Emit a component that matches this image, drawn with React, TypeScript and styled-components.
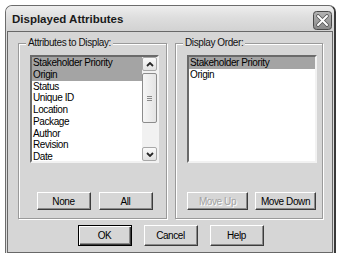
import React from 'react';
import styled, { createGlobalStyle } from 'styled-components';

const Global = createGlobalStyle`
  html, body { margin: 0; padding: 0; background: #ffffff; }
  body { font-family: "Liberation Sans", Arial, sans-serif; color: #000; }
`;

const Page = styled.div`
  width: 350px;
  height: 256px;
  box-sizing: border-box;
  padding: 5px 0 0 5px;
  overflow: hidden;
`;

const Window = styled.div`
  width: 331px;
  box-sizing: border-box;
  border: 1px solid #6c6c6c;
  border-right: 2px solid #3a3a3a;
  border-bottom: none;
  border-radius: 7px 7px 0 0;
  background: #dcdcdc;
  display: flex;
  flex-direction: column;
`;

const TitleBar = styled.div`
  height: 25px;
  display: flex;
  align-items: center;
  justify-content: space-between;
  padding: 0 2px 0 6px;
  border-radius: 6px 6px 0 0;
  background: linear-gradient(#eeeeee, #dedede 45%, #d2d2d2);
`;

const Title = styled.span`
  font-family: "Liberation Sans", Arial, sans-serif;
  font-weight: bold;
  font-size: 11.5px;
  color: #1a1a1a;
  padding-top: 1px;
`;

const CloseBtn = styled.div`
  width: 19px;
  height: 19px;
  display: flex;
  margin-top: 3px;
`;

const Client = styled.div`
  margin: 0 1px;
  border: 1px solid #686868;
  background: #d6d6d6;
  padding: 0 9px 6px 10px;
  display: flex;
  flex-direction: column;
`;

const GroupsRow = styled.div`
  display: flex;
  gap: 8px;
  margin-top: 11px;
`;

const GroupBox = styled.div<{ $w: number; $pr: number }>`
  width: ${(p) => p.$w}px;
  box-sizing: border-box;
  border: 1px solid #9a9a9a;
  box-shadow: inset 1px 1px 0 #ffffff, 1px 1px 0 #ffffff;
  padding: 0 ${(p) => p.$pr}px 8px 11px;
  display: flex;
  flex-direction: column;
`;

const Legend = styled.div`
  width: fit-content;
  margin: -7px 0 0 -4px;
  padding: 0 2px;
  background: #d6d6d6;
  font-size: 10px;
  letter-spacing: -0.4px;
  line-height: 12px;
  color: #111;
`;

const ListBox = styled.div<{ $w: number }>`
  width: ${(p) => p.$w}px;
  height: 108px;
  box-sizing: border-box;
  margin-top: 6px;
  border: 2px solid;
  border-color: #6a6a6a #f2f2f2 #f2f2f2 #6a6a6a;
  background: #ffffff;
  display: flex;
  overflow: hidden;
`;

const Items = styled.div`
  flex: 1;
  min-width: 0;
  display: flex;
  flex-direction: column;
`;

const Item = styled.div<{ $sel?: boolean }>`
  flex: none;
  height: 11.75px;
  line-height: 11.75px;
  padding-left: 1px;
  font-size: 10px;
  letter-spacing: -0.4px;
  white-space: nowrap;
  background: ${(p) => (p.$sel ? '#a4a4a4' : 'transparent')};
  color: #000;
`;

const ScrollBar = styled.div`
  width: 15px;
  flex: none;
  display: flex;
  flex-direction: column;
  background: #f1f1f1;
`;

const ScrollBtn = styled.div`
  height: 14px;
  box-sizing: border-box;
  border: 1px solid #a8a8a8;
  border-radius: 2px;
  background: linear-gradient(#fafafa, #e2e2e2);
  display: flex;
  align-items: center;
  justify-content: center;
`;

const Track = styled.div`
  flex: 1;
  display: flex;
  flex-direction: column;
  padding-top: 2px;
`;

const Thumb = styled.div`
  height: 50px;
  box-sizing: border-box;
  border: 1px solid #8c8c8c;
  border-radius: 2px;
  background: linear-gradient(90deg, #f6f6f6, #e4e4e4);
  display: flex;
  flex-direction: column;
  align-items: center;
  justify-content: center;
  gap: 1px;
`;

const Grip = styled.div`
  width: 5px;
  height: 1px;
  background: #8a8a8a;
`;

const ButtonRow = styled.div<{ $gap: number; $mt: number }>`
  display: flex;
  justify-content: center;
  gap: ${(p) => p.$gap}px;
  margin-top: ${(p) => p.$mt}px;
`;

const Button = styled.button<{ $w: number; $h: number; $default?: boolean }>`
  width: ${(p) => p.$w}px;
  height: ${(p) => p.$h}px;
  box-sizing: border-box;
  padding: 0;
  margin: 0;
  background: #d6d6d6;
  border: 1px solid;
  border-color: ${(p) => (p.$default ? '#000' : '#ffffff #3c3c3c #3c3c3c #ffffff')};
  box-shadow: ${(p) =>
    p.$default
      ? 'inset 1px 1px 0 #ffffff, inset -1px -1px 0 #3c3c3c, inset -2px -2px 0 #8a8a8a'
      : 'inset -1px -1px 0 #8a8a8a'};
  font-family: "Liberation Sans", Arial, sans-serif;
  font-size: 10px;
  letter-spacing: -0.4px;
  color: #000;
  &:disabled {
    color: #a2a2a2;
    text-shadow: 1px 1px 0 #ffffff;
  }
`;

const Chevron = ({ up }: { up?: boolean }) => (
  <svg width="8" height="5" viewBox="0 0 8 5">
    <path
      d={up ? 'M1 4 L4 1 L7 4' : 'M1 1 L4 4 L7 1'}
      fill="none"
      stroke="#262626"
      strokeWidth="1.8"
    />
  </svg>
);

const CloseIcon = () => (
  <svg width="19" height="19" viewBox="0 0 19 19">
    <defs>
      <linearGradient id="cg" x1="0" y1="0" x2="0" y2="1">
        <stop offset="0" stopColor="#b4b4b4" />
        <stop offset="1" stopColor="#8a8a8a" />
      </linearGradient>
    </defs>
    <rect x="0.5" y="0.5" width="18" height="18" rx="3" fill="url(#cg)" stroke="#4a4a4a" />
    <path d="M5 5 L14 14 M14 5 L5 14" stroke="#555" strokeWidth="3.6" strokeLinecap="round" />
    <path d="M5 5 L14 14 M14 5 L5 14" stroke="#ffffff" strokeWidth="2" strokeLinecap="round" />
  </svg>
);

const leftItems = [
  'Stakeholder Priority',
  'Origin',
  'Status',
  'Unique ID',
  'Location',
  'Package',
  'Author',
  'Revision',
  'Date',
];
const rightItems = ['Stakeholder Priority', 'Origin'];

export default function App() {
  return (
    <Page>
      <Global />
      <Window>
        <TitleBar>
          <Title>Displayed Attributes</Title>
          <CloseBtn>
            <CloseIcon />
          </CloseBtn>
        </TitleBar>
        <Client>
          <GroupsRow>
            <GroupBox $w={149} $pr={7}>
              <Legend>Attributes to Display:</Legend>
              <ListBox $w={129}>
                <Items>
                  {leftItems.map((t, i) => (
                    <Item key={t} $sel={i < 2}>
                      {t}
                    </Item>
                  ))}
                </Items>
                <ScrollBar>
                  <ScrollBtn>
                    <Chevron up />
                  </ScrollBtn>
                  <Track>
                    <Thumb>
                      <Grip />
                      <Grip />
                      <Grip />
                    </Thumb>
                  </Track>
                  <ScrollBtn>
                    <Chevron />
                  </ScrollBtn>
                </ScrollBar>
              </ListBox>
              <ButtonRow $gap={8} $mt={29}>
                <Button $w={54} $h={18}>None</Button>
                <Button $w={54} $h={18}>All</Button>
              </ButtonRow>
            </GroupBox>
            <GroupBox $w={148} $pr={6}>
              <Legend>Display Order:</Legend>
              <ListBox $w={130}>
                <Items>
                  {rightItems.map((t, i) => (
                    <Item key={t} $sel={i === 0}>
                      {t}
                    </Item>
                  ))}
                </Items>
              </ListBox>
              <ButtonRow $gap={7} $mt={29}>
                <Button $w={62} $h={18} disabled>
                  Move Up
                </Button>
                <Button $w={62} $h={18}>Move Down</Button>
              </ButtonRow>
            </GroupBox>
          </GroupsRow>
          <ButtonRow $gap={12} $mt={6}>
            <Button $w={54} $h={21} $default>
              OK
            </Button>
            <Button $w={54} $h={21}>Cancel</Button>
            <Button $w={54} $h={21}>Help</Button>
          </ButtonRow>
        </Client>
      </Window>
    </Page>
  );
}
